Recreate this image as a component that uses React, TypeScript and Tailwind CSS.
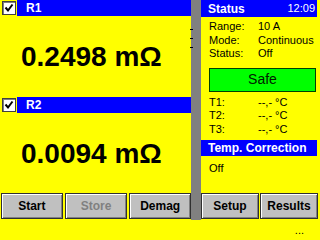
import React from "react";

const font = { fontFamily: '"Liberation Sans", Arial, sans-serif' };

const CheckBox: React.FC = () => (
  <div className="w-[17px] h-full flex items-center justify-center bg-[#ffff00]">
    <div className="w-[14px] h-[14px] bg-white border border-[#404040] shadow-[inset_1px_1px_0_#808080] flex items-center justify-center">
      <svg width="10" height="10" viewBox="0 0 10 10">
        <path d="M1.5 4.5 L4 7.5 L8.5 1.5" stroke="#000" strokeWidth="2" fill="none" />
      </svg>
    </div>
  </div>
);

const Channel: React.FC<{ name: string; value: string }> = ({ name, value }) => (
  <div className="flex flex-col h-[97px]">
    <div className="flex h-[16px]">
      <CheckBox />
      <div className="flex-1 bg-[#0000ff] text-white font-bold text-[12px] leading-[16px] pl-[9px]">
        {name}
      </div>
    </div>
    <div className="flex-1 flex items-center pl-[21px] text-[28px] font-bold text-black leading-none">
      {value}
    </div>
  </div>
);

const Btn: React.FC<{ label: string; disabled?: boolean; w: string }> = ({ label, disabled, w }) => (
  <div
    className={`${w} h-[26px] bg-[#c0c0c0] border border-[#303030] shadow-[inset_1px_1px_0_#ffffff,inset_-1px_-1px_0_#808080] flex items-center justify-center text-[12px] font-bold ${
      disabled ? "text-[#808080]" : "text-black"
    }`}
  >
    {label}
  </div>
);

const Row: React.FC<{ label: string; value: string; col?: string }> = ({ label, value, col = "w-[49px]" }) => (
  <div className="flex h-[13.5px] leading-[13.5px] text-[11px] text-black">
    <span className={col}>{label}</span>
    <span>{value}</span>
  </div>
);

export default function App() {
  return (
    <div className="w-[320px] h-[240px] bg-[#ffff00] relative overflow-hidden" style={font}>
      <div className="flex h-[220px]">
        {/* left column */}
        <div className="w-[191px] flex flex-col relative">
          <Channel name="R1" value="0.2498 mΩ" />
          <Channel name="R2" value="0.0094 mΩ" />
          <div className="flex gap-[2px] pl-[1px] mt-[-1px]">
            <Btn label="Start" w="w-[62px]" />
            <Btn label="Store" w="w-[63px]" disabled />
            <Btn label="Demag" w="w-[62px]" />
          </div>
          <div className="absolute right-[-2px] top-[29px] w-[3px] h-[1px] bg-black" />
          <div className="absolute right-[-2px] top-[38px] w-[3px] h-[1px] bg-black" />
          <div className="absolute right-[-2px] top-[47px] w-[3px] h-[1px] bg-black" />
        </div>

        {/* divider */}
        <div className="w-[10px] bg-[#808080]" />

        {/* right column */}
        <div className="flex-1 flex flex-col">
          <div className="w-[116px] h-[17px] bg-[#0000ff] text-white flex items-center justify-between pl-[7px] pr-[2px]">
            <span className="text-[12px] font-bold">Status</span>
            <span className="text-[11px]">12:09</span>
          </div>
          <div className="pl-[8px] pt-[3px]">
            <Row label="Range:" value="10 A" />
            <Row label="Mode:" value="Continuous" />
            <Row label="Status:" value="Off" />
          </div>
          <div className="ml-[8px] mt-[7px] w-[107px] h-[24px] bg-[#00ff00] border border-[#004000] flex items-center justify-center text-[14px] text-[#002000]">
            Safe
          </div>
          <div className="pl-[8px] pt-[4px]">
            <Row label="T1:" value="--,- °C" />
            <Row label="T2:" value="--,- °C" />
            <Row label="T3:" value="--,- °C" />
          </div>
          <div className="mt-[4px] w-[116px] h-[16px] bg-[#0000ff] text-white text-[12px] font-bold leading-[16px] pl-[7px]">
            Temp. Correction
          </div>
          <div className="pl-[8px] pt-[6px] text-[11px] text-black leading-[13.5px]">Off</div>
          <div className="flex-1" />
          <div className="flex gap-[1px] mb-[1px] mt-[-1px]">
            <Btn label="Setup" w="w-[58px]" />
            <Btn label="Results" w="w-[58px]" />
          </div>
        </div>
      </div>
      <div className="flex justify-end pr-[16px] text-[11px] leading-[20px] text-black">...</div>
    </div>
  );
}
